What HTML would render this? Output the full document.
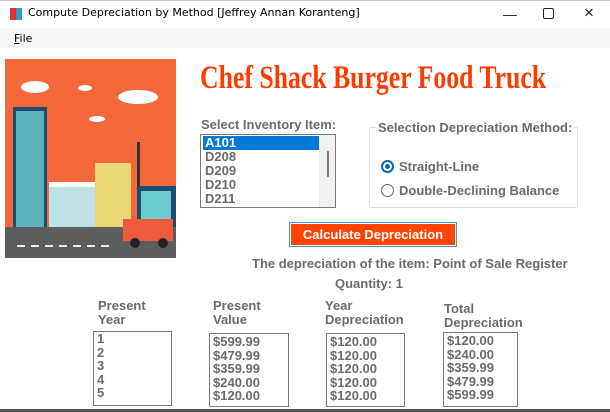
<!DOCTYPE html>
<html><head><style>
body{margin:0;width:610px;height:412px;background:#fff;font-family:"Liberation Sans",sans-serif;position:relative;overflow:hidden}
.a{position:absolute;white-space:nowrap}
.g{color:#6b6b6b;font-weight:bold;font-size:13px}
.lb{position:absolute;border:1px solid #7a7a7a;background:#fff;font-size:13px;color:#6b6b6b;font-weight:bold;line-height:14px;box-sizing:border-box;padding:1px 3px}
</style></head><body>
<div class="a" style="left:0;top:0;width:610px;height:28px;background:#fff;border-top:1px solid #ccc"></div>
<div class="a" style="left:10px;top:8px;width:12px;height:12px;background:linear-gradient(90deg,#d33 50%,#39c 50%)"></div>
<div class="a" style="left:28px;top:6px;color:#000;font-family:'DejaVu Sans',sans-serif;font-size:11px">Compute Depreciation by Method [Jeffrey Annan Koranteng]</div>
<div class="a" style="left:503px;top:6px;font-size:14px;color:#222">&#8212;</div>
<div class="a" style="left:543px;top:8px;width:9px;height:9px;border:1px solid #222;border-radius:2px"></div>
<div class="a" style="left:584px;top:3px;font-size:17px;color:#222">&#215;</div>
<div class="a" style="left:0;top:28px;width:610px;height:20px;background:#f7f7f7"></div>
<div class="a" style="left:14px;top:32px;color:#000;font-family:'DejaVu Sans',sans-serif;font-size:11px"><u>F</u>ile</div>
<svg class="a" style="left:5px;top:59px" width="171" height="199" viewBox="0 0 171 199">
<rect width="171" height="199" fill="#f4683c"/>
<g fill="#fff"><ellipse cx="30" cy="28" rx="14" ry="6"/><ellipse cx="80" cy="29" rx="7" ry="3"/><ellipse cx="133" cy="38" rx="20" ry="7"/><ellipse cx="92" cy="60" rx="8" ry="3"/></g>
<rect x="8" y="48" width="34" height="170" fill="#1c4d6b"/>
<rect x="11" y="52" width="28" height="130" fill="#6ccbd3" opacity=".8"/>
<rect x="44" y="126" width="46" height="100" fill="#bfe3e4"/><rect x="44" y="123" width="46" height="5" fill="#fff"/>
<rect x="90" y="104" width="36" height="120" fill="#e9d773"/>
<rect x="132" y="83" width="3" height="140" fill="#333"/>
<rect x="132" y="127" width="40" height="100" fill="#1c4d6b"/><rect x="136" y="132" width="30" height="28" fill="#6ccbd3"/>
<rect x="0" y="168" width="171" height="31" fill="#5d5d5d"/>
<g fill="#eee"><rect x="12" y="186" width="8" height="2"/><rect x="26" y="186" width="8" height="2"/><rect x="40" y="186" width="8" height="2"/><rect x="54" y="186" width="8" height="2"/><rect x="68" y="186" width="8" height="2"/><rect x="82" y="186" width="8" height="2"/><rect x="96" y="186" width="8" height="2"/></g>
<rect x="118" y="160" width="50" height="22" fill="#f05a3c"/>
<circle cx="130" cy="184" r="5" fill="#222"/><circle cx="158" cy="184" r="5" fill="#222"/>
</svg>
<div class="a" style="left:200px;top:60px;font-family:'Liberation Serif',serif;font-weight:bold;font-size:33px;color:#ff3c00;transform:scaleX(0.78);transform-origin:left">Chef Shack Burger Food Truck</div>
<div class="a g" style="left:201px;top:117px">Select Inventory Item:</div>
<div class="lb" style="left:200px;top:134px;width:136px;height:74px;padding:1px 2px">
<div style="background:#0078d7;color:#fff;width:116px;padding-left:2px">A101</div>
<div style="padding-left:2px">D208</div><div style="padding-left:2px">D209</div><div style="padding-left:2px">D210</div><div style="padding-left:2px">D211</div>
<div class="a" style="left:118px;top:0;width:16px;height:72px;background:#f0f0f0"></div>
<div class="a" style="left:126px;top:16px;width:2px;height:26px;background:#777"></div>
</div>
<div class="a" style="left:369px;top:127px;width:209px;height:81px;border:1px solid #ddd;border-radius:2px;box-sizing:border-box"></div>
<div class="a g" style="left:376px;top:120px;background:#fff;padding:0 2px">Selection Depreciation Method:</div>
<div class="a" style="left:381px;top:160px;width:9px;height:9px;border:2px solid #0067c0;border-radius:50%;background:#fff"></div>
<div class="a" style="left:385px;top:164px;width:5px;height:5px;border-radius:50%;background:#0067c0"></div>
<div class="a g" style="left:399px;top:159px">Straight-Line</div>
<div class="a" style="left:381px;top:184px;width:11px;height:11px;border:1px solid #666;border-radius:50%"></div>
<div class="a g" style="left:399px;top:183px">Double-Declining Balance</div>
<div class="a" style="left:289px;top:222px;width:168px;height:25px;border:1px solid #4a90d9;box-sizing:border-box;padding:1px"><div style="background:#ff4500;height:100%;color:#fff;font-weight:bold;font-size:13px;text-align:center;line-height:21px">Calculate Depreciation</div></div>
<div class="a g" style="left:252px;top:256px">The depreciation of the item: Point of Sale Register</div>
<div class="a g" style="left:335px;top:276px">Quantity: 1</div>
<div class="a g" style="left:98px;top:299px;line-height:14px">Present<br>Year</div>
<div class="a g" style="left:213px;top:299px;line-height:14px">Present<br>Value</div>
<div class="a g" style="left:325px;top:299px;line-height:14px">Year<br>Depreciation</div>
<div class="a g" style="left:444px;top:302px;line-height:14px">Total<br>Depreciation</div>
<div class="lb" style="left:93px;top:331px;width:79px;height:75px;line-height:13.6px;padding-top:0">1<br>2<br>3<br>4<br>5</div>
<div class="lb" style="left:209px;top:333px;width:80px;height:74px;line-height:13.6px">$599.99<br>$479.99<br>$359.99<br>$240.00<br>$120.00</div>
<div class="lb" style="left:326px;top:333px;width:79px;height:74px;line-height:13.6px">$120.00<br>$120.00<br>$120.00<br>$120.00<br>$120.00</div>
<div class="lb" style="left:443px;top:332px;width:75px;height:75px;line-height:13.6px">$120.00<br>$240.00<br>$359.99<br>$479.99<br>$599.99</div>
<div class="a" style="left:0;top:409px;width:610px;height:3px;background:#555"></div>
</body></html>
